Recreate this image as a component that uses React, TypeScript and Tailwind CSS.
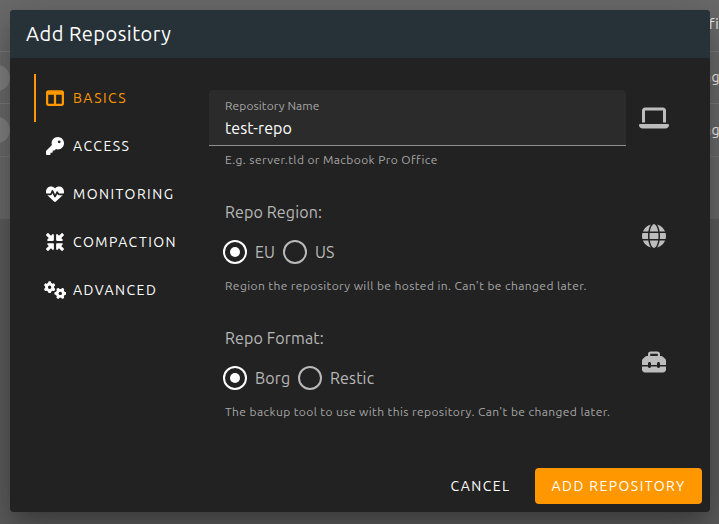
import type { ReactNode } from "react";
import {
  FaGears,
  FaGlobe,
  FaHeartPulse,
  FaKey,
  FaLaptop,
  FaMinimize,
  FaTableColumns,
  FaToolbox,
} from "react-icons/fa6";

const tabs: { label: string; icon: ReactNode; active?: boolean }[] = [
  { label: "BASICS", icon: <FaTableColumns className="h-[18px] w-[18px]" />, active: true },
  { label: "ACCESS", icon: <FaKey className="h-[18px] w-[18px]" /> },
  { label: "MONITORING", icon: <FaHeartPulse className="h-[18px] w-[18px]" /> },
  { label: "COMPACTION", icon: <FaMinimize className="h-[18px] w-[18px]" /> },
  { label: "ADVANCED", icon: <FaGears className="h-[18px] w-[22.5px]" /> },
];

function Radio({ label, checked, className }: { label: string; checked?: boolean; className?: string }) {
  return (
    <label className="flex items-center">
      <span
        className={`flex h-6 w-6 items-center justify-center rounded-full border-2 ${checked ? "border-white" : "border-[#b9b9b9]"}`}
      >
        {checked && <span className="h-[10px] w-[10px] rounded-full bg-white" />}
      </span>
      <span
        className={`ml-2 whitespace-nowrap text-base leading-6 tracking-[0.15px] text-[#b8b8b8] ${className ?? ""}`}
      >
        {label}
      </span>
    </label>
  );
}

function Backdrop() {
  return (
    <div className="h-[524px] bg-[#5c5c5c] text-[14px] text-[#f4f4f4]">
      <div className="h-[219px] bg-[#6a6a6a]">
        <div className="flex h-[52px] items-center border-b border-[#7a7a7a] pb-[3px] pl-[709px] tracking-[0.3px]">
          fic
        </div>
        <div className="flex h-[52px] items-center border-b border-[#7a7a7a]">
          <span className="-ml-4 h-[26px] w-[26px] shrink-0 rounded-full bg-[#808080]" />
          <span className="ml-[693px] tracking-[0.4px]">ng</span>
        </div>
        <div className="flex h-[53px] items-center border-b border-[#747474]">
          <span className="-ml-4 h-[26px] w-[26px] shrink-0 rounded-full bg-[#808080]" />
          <span className="ml-[693px] tracking-[0.4px]">ng</span>
        </div>
      </div>
    </div>
  );
}

export default function App() {
  return (
    <div className="relative h-[524px] w-[719px] overflow-hidden font-['Ubuntu','Noto_Sans',sans-serif]">
      <Backdrop />
      <div className="absolute top-[10px] left-[10px] flex h-[502px] w-[700px] flex-col overflow-hidden rounded-[4px] bg-[#222] shadow-[0_11px_15px_-7px_rgba(0,0,0,0.2),0_24px_38px_3px_rgba(0,0,0,0.14),0_9px_46px_8px_rgba(0,0,0,0.12)]">
        <header className="flex h-12 shrink-0 items-center bg-[#273238] px-4 text-[20px] text-white">
          <h1 className="tracking-[0.48px]">Add Repository</h1>
        </header>

        <div className="flex flex-1">
          <nav className="w-[199px] shrink-0 pt-4 pl-6">
            {tabs.map((tab) => (
              <div
                key={tab.label}
                className={`flex h-12 items-center border-l-2 ${tab.active ? "border-[#ff9800] text-[#ff9800]" : "border-transparent text-white"}`}
              >
                <span className="ml-[7px] flex w-6 justify-center">{tab.icon}</span>
                <span className="ml-[6px] text-[14px] tracking-[1.48px]">{tab.label}</span>
              </div>
            ))}
          </nav>

          <main className="flex-1 text-[#b8b8b8]">
            <section className="flex pt-8">
              <div className="w-[417px]">
                <div className="h-14 rounded-t-[4px] border-b border-[#8f8f8f] bg-[#2b2b2b] px-4 pt-2">
                  <div className="text-[12px] leading-4 tracking-[0.1px] text-[#a6a6a6]">Repository Name</div>
                  <div className="mt-[2px] text-base leading-6 tracking-[0.1px] text-white">test-repo</div>
                </div>
                <div className="px-4 pt-[6px] text-[12px] leading-4 tracking-[0.4px] text-[#a6a6a6]">
                  E.g. server.tld or Macbook Pro Office
                </div>
              </div>
              <FaLaptop className="mt-4 ml-[13px] h-6 w-[30px] text-[#bdbdbd]" />
            </section>

            <section className="flex pt-8">
              <div className="w-[417px] pl-4">
                <div className="text-base leading-6 tracking-[0.13px]">Repo Region:</div>
                <div className="-ml-[2px] mt-4 flex gap-2">
                  <Radio label="EU" checked className="w-5" />
                  <Radio label="US" />
                </div>
                <div className="mt-[14px] whitespace-nowrap text-[12px] leading-4 tracking-[0.4px] text-[#a6a6a6]">
                  Region the repository will be hosted in. Can't be changed later.
                </div>
              </div>
              <FaGlobe className="mt-6 ml-4 h-6 w-6 text-[#bdbdbd]" />
            </section>

            <section className="flex pt-8">
              <div className="w-[417px] pl-4">
                <div className="text-base leading-6 tracking-[0.13px]">Repo Format:</div>
                <div className="-ml-[2px] mt-4 flex gap-2">
                  <Radio label="Borg" checked className="w-[35px]" />
                  <Radio label="Restic" />
                </div>
                <div className="mt-[14px] whitespace-nowrap text-[12px] leading-4 tracking-[0.4px] text-[#a6a6a6]">
                  The backup tool to use with this repository. Can't be changed later.
                </div>
              </div>
              <FaToolbox className="mt-6 ml-4 h-6 w-6 text-[#bdbdbd]" />
            </section>
          </main>
        </div>

        <footer className="flex h-[52px] shrink-0 items-center justify-end px-2 text-[14px] text-white">
          <button className="mr-2 h-9 w-[93px] tracking-[1.4px]">CANCEL</button>
          <button className="h-9 w-[167px] rounded-[4px] bg-[#ff9800] tracking-[1.43px]">ADD REPOSITORY</button>
        </footer>
      </div>
    </div>
  );
}
